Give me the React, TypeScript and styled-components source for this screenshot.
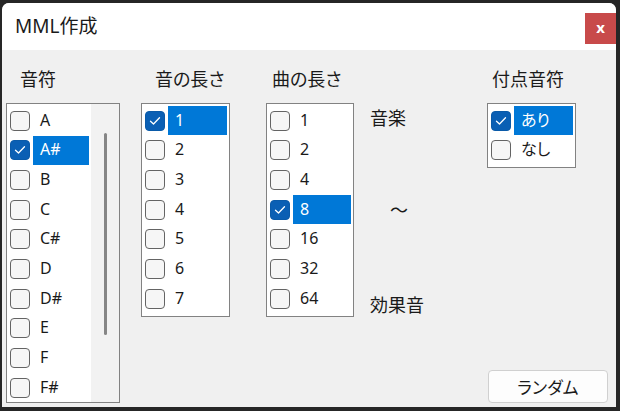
import React from "react";
import styled, { createGlobalStyle } from "styled-components";

const Global = createGlobalStyle`
  html, body { margin: 0; padding: 0; }
  body {
    background: #262626;
    font-family: "Noto Sans", "Noto Sans CJK JP", sans-serif;
    color: #1a1a1a;
  }
  * { box-sizing: border-box; }
`;

const Page = styled.div`
  width: 620px;
  height: 411px;
  padding: 3px 4px 4px 2px;
  background: #262626;
  display: flex;
`;

const Window = styled.div`
  flex: 1;
  min-height: 0;
  display: flex;
  flex-direction: column;
  background: #f0f0f0;
  border-radius: 7px 7px 0 0;
  overflow: hidden;
`;

const TitleBar = styled.div`
  height: 47px;
  flex: none;
  background: #ffffff;
  display: flex;
  align-items: center;
  justify-content: space-between;
  padding-left: 13px;
`;

const Title = styled.div`
  font-size: 19px;
  line-height: 22px;
  color: #1a1a1a;
  margin-top: -1px;
`;

const CloseButton = styled.div`
  width: 31px;
  height: 31px;
  margin-top: 3px;
  background: #c84a4a;
  color: #ffffff;
  font-size: 15px;
  font-weight: 700;
  display: flex;
  align-items: center;
  justify-content: center;
  line-height: 1;
  padding-bottom: 2px;
`;

const Body = styled.div`
  flex: 1;
  min-height: 0;
  display: grid;
  grid-template-columns: 135px 125px 104px 117px 1fr;
  grid-template-rows: minmax(0, 1fr);
  padding: 18px 0 4px 4px;
  font-feature-settings: "palt";
`;

const Column = styled.div`
  display: flex;
  flex-direction: column;
  min-height: 0;
`;

const Label = styled.div<{ $indent: number }>`
  font-size: 18px;
  line-height: 22px;
  height: 22px;
  flex: none;
  margin: 0 0 13px ${(p) => p.$indent}px;
  color: #1a1a1a;
  white-space: nowrap;
`;

const ListBox = styled.div<{ $width: number; $height?: number }>`
  width: ${(p) => p.$width}px;
  ${(p) => (p.$height ? `height: ${p.$height}px; flex: none;` : "flex: 1; min-height: 0;")}
  border: 1px solid #828282;
  background: #ffffff;
  display: flex;
  overflow: hidden;
`;

const Items = styled.div`
  flex: 1;
  padding-top: 2px;
  overflow: hidden;
`;

const Row = styled.div`
  height: 29.67px;
  display: flex;
  align-items: center;
  padding-left: 3px;
`;

const Check = styled.div<{ $on: boolean }>`
  width: 20px;
  height: 20px;
  flex: none;
  border-radius: 4px;
  border: 1px solid ${(p) => (p.$on ? "#0a5aa8" : "#646464")};
  background: ${(p) => (p.$on ? "#0a5fb4" : "#f6f6f6")};
  display: flex;
  align-items: center;
  justify-content: center;
`;

const ItemText = styled.div<{ $on: boolean }>`
  flex: 1;
  height: 29px;
  margin: 0 2px 0 3px;
  padding-left: 7px;
  display: flex;
  align-items: center;
  font-size: 16px;
  line-height: 1;
  padding-bottom: 2px;
  white-space: nowrap;
  background: ${(p) => (p.$on ? "#0078d7" : "transparent")};
  color: ${(p) => (p.$on ? "#ffffff" : "#1a1a1a")};
`;

const ScrollTrack = styled.div`
  width: 28px;
  flex: none;
  background: #f2f2f2;
  display: flex;
  justify-content: center;
  align-items: flex-start;
  padding-top: 29px;
`;

const Thumb = styled.div`
  width: 3px;
  height: 202px;
  border-radius: 2px;
  background: #868686;
`;

const SideText = styled.div<{ $top: number; $indent: number }>`
  font-size: 18px;
  line-height: 22px;
  height: 22px;
  margin: ${(p) => p.$top}px 0 0 ${(p) => p.$indent}px;
  white-space: nowrap;
`;

const RandomButton = styled.div`
  margin: auto 0 0 1px;
  width: 120px;
  height: 33px;
  flex: none;
  border: 1px solid #d0d0d0;
  border-radius: 4px;
  background: #fdfdfd;
  display: flex;
  align-items: center;
  justify-content: center;
  font-size: 17px;
  padding-bottom: 1px;
`;

const Tick = () => (
  <svg width="12" height="10" viewBox="0 0 12 10">
    <path d="M1.5 5.2 L4.5 8 L10.5 1.8" fill="none" stroke="#ffffff" strokeWidth="1.3" strokeLinecap="round" strokeLinejoin="round" />
  </svg>
);

type ListProps = { items: string[]; selected: string };

const ListItems: React.FC<ListProps> = ({ items, selected }) => (
  <Items>
    {items.map((it) => {
      const on = it === selected;
      return (
        <Row key={it}>
          <Check $on={on}>{on && <Tick />}</Check>
          <ItemText $on={on}>{it}</ItemText>
        </Row>
      );
    })}
  </Items>
);

export default function App() {
  return (
    <>
      <Global />
      <Page>
        <Window>
          <TitleBar>
            <Title>MML作成</Title>
            <CloseButton>x</CloseButton>
          </TitleBar>
          <Body>
            <Column>
              <Label $indent={14}>音符</Label>
              <ListBox $width={114}>
                <ListItems
                  items={["A", "A#", "B", "C", "C#", "D", "D#", "E", "F", "F#"]}
                  selected="A#"
                />
                <ScrollTrack>
                  <Thumb />
                </ScrollTrack>
              </ListBox>
            </Column>
            <Column>
              <Label $indent={14}>音の長さ</Label>
              <ListBox $width={89} $height={214}>
                <ListItems items={["1", "2", "3", "4", "5", "6", "7"]} selected="1" />
              </ListBox>
            </Column>
            <Column>
              <Label $indent={6}>曲の長さ</Label>
              <ListBox $width={88} $height={214}>
                <ListItems items={["1", "2", "4", "8", "16", "32", "64"]} selected="8" />
              </ListBox>
            </Column>
            <Column>
              <SideText $top={39} $indent={0}>音楽</SideText>
              <SideText $top={70} $indent={20}>〜</SideText>
              <SideText $top={73} $indent={0}>効果音</SideText>
            </Column>
            <Column>
              <Label $indent={5}>付点音符</Label>
              <ListBox $width={89} $height={65}>
                <ListItems items={["あり", "なし"]} selected="あり" />
              </ListBox>
              <RandomButton>ランダム</RandomButton>
            </Column>
          </Body>
        </Window>
      </Page>
    </>
  );
}
